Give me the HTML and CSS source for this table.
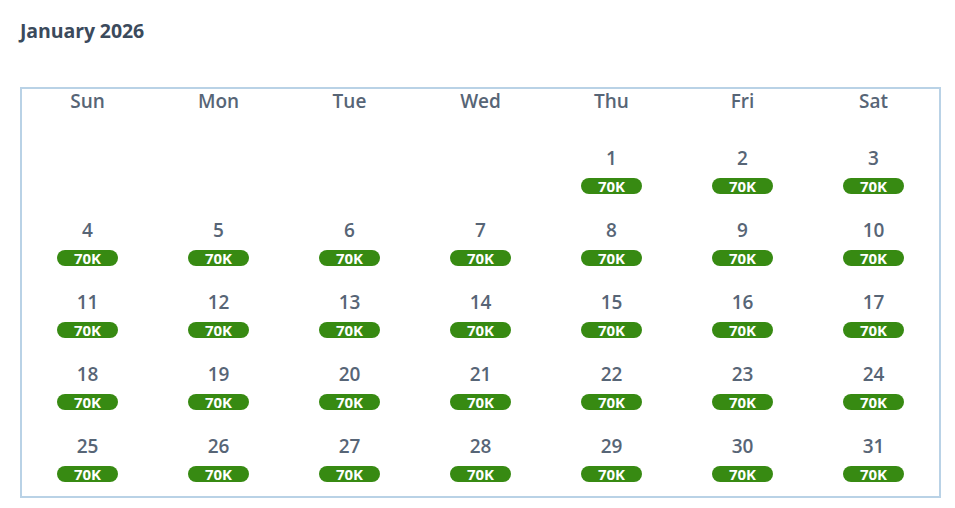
FILE: index.html
```html
<!DOCTYPE html>
<html>
<head>
<meta charset="utf-8">
<link rel="stylesheet" href="styles.css">
</head>
<body>
<div class="page">
  <h1 class="title">January 2026</h1>
  <div class="calendar">
    <div class="dow">Sun</div><div class="dow">Mon</div><div class="dow">Tue</div><div class="dow">Wed</div><div class="dow">Thu</div><div class="dow">Fri</div><div class="dow">Sat</div>
    <div class="cell empty"></div><div class="cell empty"></div><div class="cell empty"></div><div class="cell empty"></div>
    <div class="cell"><span class="num">1</span><span class="pill">70K</span></div>
    <div class="cell"><span class="num">2</span><span class="pill">70K</span></div>
    <div class="cell"><span class="num">3</span><span class="pill">70K</span></div>
    <div class="cell"><span class="num">4</span><span class="pill">70K</span></div>
    <div class="cell"><span class="num">5</span><span class="pill">70K</span></div>
    <div class="cell"><span class="num">6</span><span class="pill">70K</span></div>
    <div class="cell"><span class="num">7</span><span class="pill">70K</span></div>
    <div class="cell"><span class="num">8</span><span class="pill">70K</span></div>
    <div class="cell"><span class="num">9</span><span class="pill">70K</span></div>
    <div class="cell"><span class="num">10</span><span class="pill">70K</span></div>
    <div class="cell"><span class="num">11</span><span class="pill">70K</span></div>
    <div class="cell"><span class="num">12</span><span class="pill">70K</span></div>
    <div class="cell"><span class="num">13</span><span class="pill">70K</span></div>
    <div class="cell"><span class="num">14</span><span class="pill">70K</span></div>
    <div class="cell"><span class="num">15</span><span class="pill">70K</span></div>
    <div class="cell"><span class="num">16</span><span class="pill">70K</span></div>
    <div class="cell"><span class="num">17</span><span class="pill">70K</span></div>
    <div class="cell"><span class="num">18</span><span class="pill">70K</span></div>
    <div class="cell"><span class="num">19</span><span class="pill">70K</span></div>
    <div class="cell"><span class="num">20</span><span class="pill">70K</span></div>
    <div class="cell"><span class="num">21</span><span class="pill">70K</span></div>
    <div class="cell"><span class="num">22</span><span class="pill">70K</span></div>
    <div class="cell"><span class="num">23</span><span class="pill">70K</span></div>
    <div class="cell"><span class="num">24</span><span class="pill">70K</span></div>
    <div class="cell"><span class="num">25</span><span class="pill">70K</span></div>
    <div class="cell"><span class="num">26</span><span class="pill">70K</span></div>
    <div class="cell"><span class="num">27</span><span class="pill">70K</span></div>
    <div class="cell"><span class="num">28</span><span class="pill">70K</span></div>
    <div class="cell"><span class="num">29</span><span class="pill">70K</span></div>
    <div class="cell"><span class="num">30</span><span class="pill">70K</span></div>
    <div class="cell"><span class="num">31</span><span class="pill">70K</span></div>
  </div>
</div>
</body>
</html>
```
FILE: styles.css
```css
html, body {
  margin: 0;
  padding: 0;
  background: #ffffff;
}
body {
  font-family: "Open Sans", "Noto Sans", "Liberation Sans", sans-serif;
}
.page {
  padding: 18px 0 0 20px;
}
.title {
  margin: 0;
  font-size: 19.5px;
  line-height: 26px;
  font-weight: 700;
  color: #3b4a5c;
  letter-spacing: -0.1px;
}
.calendar {
  box-sizing: border-box;
  margin-top: 43px;
  width: 921px;
  height: 411px;
  border: 2px solid #b9d2e6;
  display: grid;
  grid-template-columns: repeat(7, 131px);
  grid-template-rows: 45px repeat(5, 72px);
}
.dow {
  text-align: center;
  font-size: 19px;
  line-height: 24px;
  font-weight: 600;
  color: #576576;
}
.cell {
  display: flex;
  flex-direction: column;
  align-items: center;
  padding-top: 12px;
}
.num {
  font-size: 19px;
  line-height: 24px;
  font-weight: 600;
  color: #576576;
}
.pill {
  margin-top: 8px;
  width: 61px;
  height: 16px;
  border-radius: 8px;
  background: #378a12;
  color: #ffffff;
  font-size: 15px;
  line-height: 16px;
  font-weight: 700;
  text-align: center;
}
```
